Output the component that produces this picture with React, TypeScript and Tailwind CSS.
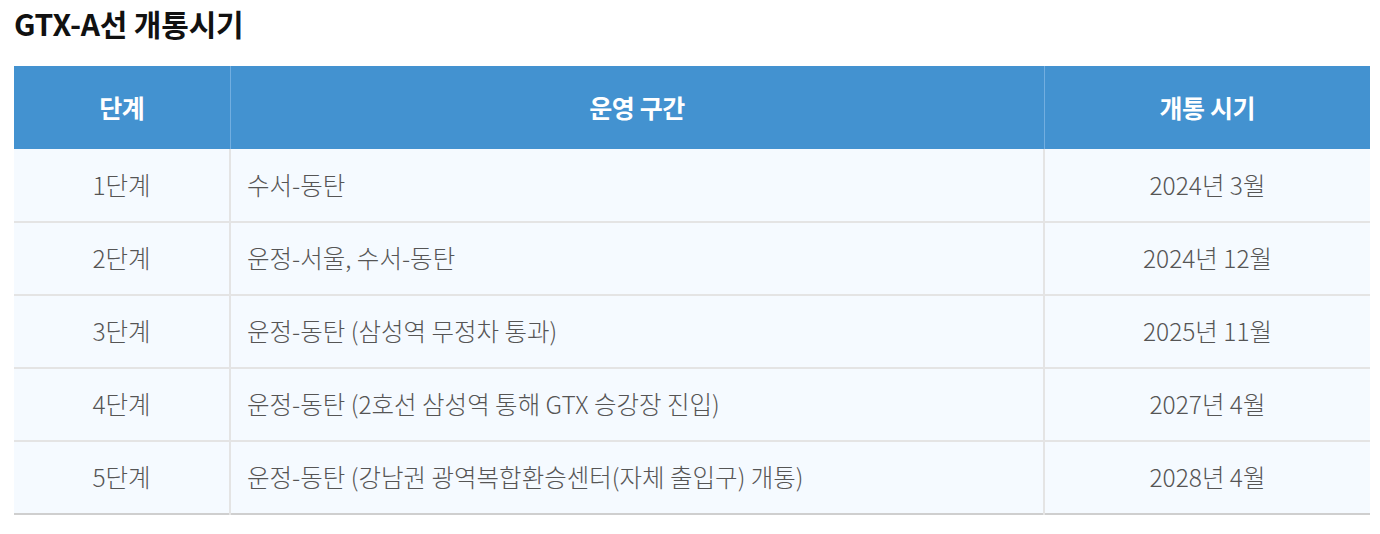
import React from "react";

const rows = [
  { step: "1단계", section: "수서-동탄", date: "2024년 3월" },
  { step: "2단계", section: "운정-서울, 수서-동탄", date: "2024년 12월" },
  { step: "3단계", section: "운정-동탄 (삼성역 무정차 통과)", date: "2025년 11월" },
  { step: "4단계", section: "운정-동탄 (2호선 삼성역 통해 GTX 승강장 진입)", date: "2027년 4월" },
  { step: "5단계", section: "운정-동탄 (강남권 광역복합환승센터(자체 출입구) 개통)", date: "2028년 4월" },
];

export default function App() {
  return (
    <main
      className="bg-white w-[1380px] h-[534px] px-[14px] pt-[4px]"
      style={{ fontFamily: '"Noto Sans CJK KR", "Noto Sans", sans-serif' }}
    >
      <h2 className="text-[30px] font-bold text-[#111] tracking-[-0.2px] leading-[38px]">GTX-A선 개통시기</h2>

      <table className="mt-[24px] w-[1356px] table-fixed border-collapse">
        <colgroup>
          <col className="w-[216px]" />
          <col className="w-[814px]" />
          <col className="w-[326px]" />
        </colgroup>
        <thead>
          <tr className="bg-[#4392d0] text-white text-[25px] font-bold tracking-[-0.4px]">
            <th className="h-[83px] border-r border-[#72aee0]">단계</th>
            <th className="h-[83px] border-r border-[#72aee0]">운영 구간</th>
            <th className="h-[83px]">개통 시기</th>
          </tr>
        </thead>
        <tbody>
          {rows.map((r, i) => (
            <tr
              key={r.step}
              className={`bg-[#f5faff] text-[24.5px] font-light text-[#555] tracking-[0px] ${
                i === rows.length - 1 ? "border-b-2 border-[#cfcfcf]" : "border-b-2 border-[#e4e4e4]"
              }`}
            >
              <td className="h-[73px] text-center border-r-2 border-[#e4e4e4]">{r.step}</td>
              <td className="h-[73px] pl-[16px] border-r-2 border-[#e4e4e4]">{r.section}</td>
              <td className="h-[73px] text-center">{r.date}</td>
            </tr>
          ))}
        </tbody>
      </table>
    </main>
  );
}
